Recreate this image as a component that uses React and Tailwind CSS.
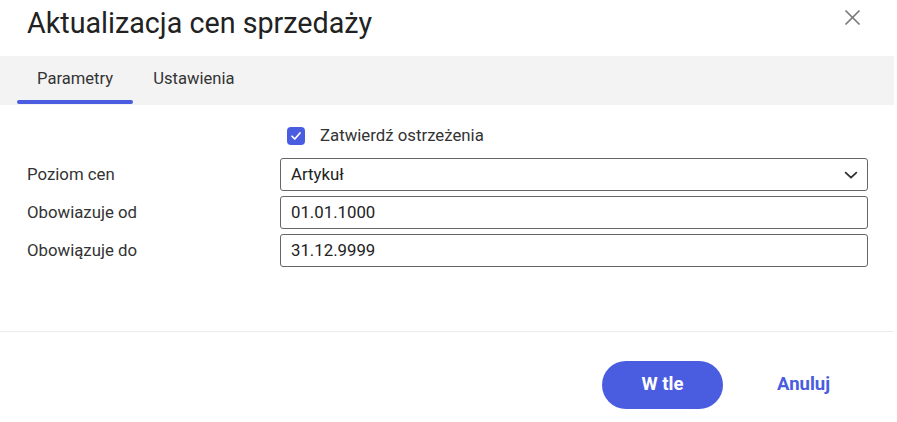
import { useState } from 'react';

function Field({ label, children }) {
  return (
    <div className="flex items-center">
      <div className="w-[253px] text-[16.8px] text-[#333]">{label}</div>
      <div className="w-[588px]">{children}</div>
    </div>
  );
}

export default function App() {
  const [tab, setTab] = useState('params');
  const [confirm, setConfirm] = useState(true);

  return (
    <div className="w-[897px] h-[422px] bg-white overflow-hidden" style={{ fontFamily: 'Roboto, "Noto Sans", sans-serif' }}>
      <div className="w-[894px] flex flex-col h-full">
        {/* Header */}
        <div className="h-[56px] flex items-start justify-between pl-[27px] pr-[31px]">
          <h1 className="text-[28.7px] leading-[46px] text-[#222] font-normal">Aktualizacja cen sprzedaży</h1>
          <button className="mt-[7px] text-[#7a7a7a]">
            <svg width="21" height="21" viewBox="0 0 24 24" fill="none" stroke="currentColor" strokeWidth="2">
              <line x1="4" y1="4" x2="20" y2="20" />
              <line x1="20" y1="4" x2="4" y2="20" />
            </svg>
          </button>
        </div>

        {/* Tabs */}
        <div className="h-[49px] bg-[#f3f3f3] flex pl-[17px]">
          {[
            ['params', 'Parametry'],
            ['settings', 'Ustawienia'],
          ].map(([id, name]) => (
            <button
              key={id}
              onClick={() => setTab(id)}
              className="relative px-[20px] text-[16.6px] text-[#333] pb-[3px]"
            >
              {name}
              {tab === id && (
                <span className="absolute left-0 right-0 bottom-[1px] h-[4px] rounded-full bg-[#4a5ce0]" />
              )}
            </button>
          ))}
        </div>

        {/* Body */}
        <div className="flex-1 pl-[27px] pt-[22px]">
          <label className="flex items-center ml-[260px] h-[18px] gap-[15px] cursor-pointer">
            <span
              onClick={() => setConfirm(!confirm)}
              className={`w-[18px] h-[18px] rounded-[4px] flex items-center justify-center ${confirm ? 'bg-[#4a5ce0]' : 'border-2 border-[#666]'}`}
            >
              {confirm && (
                <svg width="12" height="12" viewBox="0 0 24 24" fill="none" stroke="white" strokeWidth="3.5" strokeLinecap="round" strokeLinejoin="round">
                  <polyline points="4,12.5 9.5,18 20,6" />
                </svg>
              )}
            </span>
            <span className="text-[16.8px] text-[#333]">Zatwierdź ostrzeżenia</span>
          </label>

          <div className="mt-[13px] flex flex-col gap-[5px]">
            <Field label="Poziom cen">
              <div className="h-[33px] border border-[#666] rounded-[3px] flex items-center justify-between pl-[10px] pr-[8px] text-[16.8px] text-[#222]">
                <span>Artykuł</span>
                <svg width="16" height="16" viewBox="0 0 24 24" fill="none" stroke="#333" strokeWidth="2.8" strokeLinecap="round" strokeLinejoin="round">
                  <polyline points="4,8.5 12,16 20,8.5" />
                </svg>
              </div>
            </Field>
            <Field label="Obowiazuje od">
              <div className="h-[33px] border border-[#666] rounded-[3px] flex items-center pl-[10px] text-[16.8px] text-[#222]">01.01.1000</div>
            </Field>
            <Field label="Obowiązuje do">
              <div className="h-[33px] border border-[#666] rounded-[3px] flex items-center pl-[10px] text-[16.8px] text-[#222]">31.12.9999</div>
            </Field>
          </div>
        </div>

        {/* Footer */}
        <div className="h-[91px] border-t border-[#ececec] flex items-start justify-end pt-[29px] pr-[64px]">
          <button className="w-[121px] h-[48px] rounded-full bg-[#4a5ce0] text-white text-[18.5px] font-bold">W tle</button>
          <button className="ml-[54px] h-[48px] text-[#4a5ce0] text-[18.5px] font-bold">Anuluj</button>
        </div>
      </div>
    </div>
  );
}
